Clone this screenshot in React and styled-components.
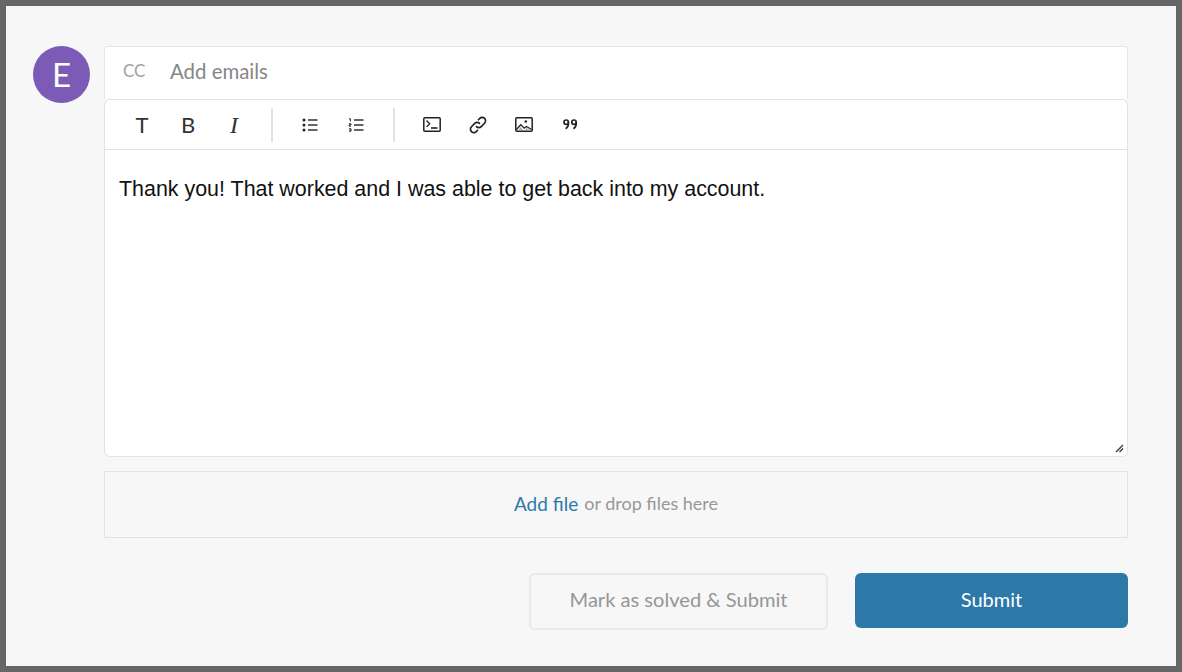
import React from 'react'
import styled, { createGlobalStyle } from 'styled-components'

const GlobalStyle = createGlobalStyle`
  html, body {
    margin: 0;
    padding: 0;
    background: #f7f7f7;
  }
  * { box-sizing: border-box; }
`

const ListIcon = () => (
  <svg width="16" height="14" viewBox="0 0 16 14">
    <circle cx="2" cy="2" r="1.500" fill="#222" />
    <circle cx="2" cy="7" r="1.500" fill="#222" />
    <circle cx="2" cy="12" r="1.500" fill="#222" />
    <path d="M6 2h9.500M6 7h9.500M6 12h9.500" stroke="#333" strokeWidth="1.600" fill="none" />
  </svg>
)

const OrderedIcon = () => (
  <svg width="16" height="14" viewBox="0 0 16 14">
    <path d="M1 .8h1.400v2.600M1 5.800h2v1.100h-2v1.200h2M1 10.800h2v2.400h-2M1.500 12h1.500" stroke="#222" strokeWidth="1" fill="none" />
    <path d="M6 2h9.500M6 7h9.500M6 12h9.500" stroke="#333" strokeWidth="1.600" fill="none" />
  </svg>
)

const TerminalIcon = () => (
  <svg width="18" height="15" viewBox="0 0 18 15" fill="none">
    <rect x=".8" y=".8" width="16.400" height="13.400" rx="1" stroke="#222" strokeWidth="1.500" />
    <path d="M3.500 3.500l3.200 3.200-3.200 3.200" stroke="#222" strokeWidth="1.300" />
    <path d="M8 11h6.500" stroke="#222" strokeWidth="1.600" />
  </svg>
)

const LinkIcon = () => (
  <svg width="20" height="20" viewBox="0 0 18 18" fill="none" stroke="#222" strokeWidth="1.500" strokeLinecap="round">
    <path d="M7.600 10.400a3 3 0 0 0 4.300 0l3-3a3 3 0 0 0-4.300-4.300l-1.200 1.200" />
    <path d="M10.400 7.600a3 3 0 0 0-4.300 0l-3 3a3 3 0 0 0 4.300 4.300l1.200-1.200" />
  </svg>
)

const ImageIcon = () => (
  <svg width="18" height="15" viewBox="0 0 18 15" fill="none">
    <rect x=".8" y=".8" width="16.400" height="13.400" rx="1" stroke="#222" strokeWidth="1.500" />
    <circle cx="10.800" cy="4.500" r="1.300" fill="#222" />
    <path d="M1.500 12.500l4.300-4.700 3.500 3.300 2.200-1.600 5 3" stroke="#222" strokeWidth="1.300" />
    <path d="M3.500 13l2.300-3 2.500 3zM10 13l1.500-2 3 2z" fill="#222" fillOpacity=".35" />
  </svg>
)

const QuoteIcon = () => (
  <svg width="15" height="11" viewBox="0 0 15 11" fill="none" stroke="#222" strokeWidth="1.700">
    <circle cx="3.200" cy="3.200" r="2.200" />
    <circle cx="11" cy="3.200" r="2.200" />
    <path d="M5.400 3.200c.2 3-.8 5.300-2.800 6.600M13.200 3.200c.2 3-.8 5.300-2.800 6.600" />
  </svg>
)

const App = () => (
  <Frame>
    <GlobalStyle />
    <Avatar>E</Avatar>
    <Main>
      <CcRow>
        <CcLabel>CC</CcLabel>
        <CcInput>Add emails</CcInput>
      </CcRow>
      <Editor>
        <Toolbar>
          <ToolGroup>
            <Tool><Glyph>T</Glyph></Tool>
            <Tool><Glyph>B</Glyph></Tool>
            <Tool><Glyph $italic>I</Glyph></Tool>
          </ToolGroup>
          <ToolGroup>
            <Tool><ListIcon /></Tool>
            <Tool><OrderedIcon /></Tool>
          </ToolGroup>
          <ToolGroup>
            <Tool><TerminalIcon /></Tool>
            <Tool><LinkIcon /></Tool>
            <Tool><ImageIcon /></Tool>
            <Tool><QuoteIcon /></Tool>
          </ToolGroup>
        </Toolbar>
        <Body>Thank you! That worked and I was able to get back into my account.</Body>
        <Grip width="9" height="9" viewBox="0 0 9 9">
          <path d="M1 8l7-7M4.500 8l3.500-3.500" stroke="#444" strokeWidth="1.500" fill="none" />
        </Grip>
      </Editor>
      <DropZone><AddFile>Add file</AddFile> or drop files here</DropZone>
      <Actions>
        <SolveButton>Mark as solved &amp; Submit</SolveButton>
        <SubmitButton>Submit</SubmitButton>
      </Actions>
    </Main>
  </Frame>
)

export default App

const uiFont = `"Lato", "Noto Sans", sans-serif`

const Frame = styled.div`
  display: flex;
  align-items: flex-start;
  gap: 14px;
  width: 1182px;
  height: 672px;
  padding: 40px 48px 0 27px;
  border: 6px solid #666;
  background: #f7f7f7;
  font-family: ${uiFont};
`

const Avatar = styled.div`
  display: flex;
  flex: none;
  align-items: center;
  justify-content: center;
  width: 57px;
  height: 57px;
  border-radius: 50%;
  background: #7c5bb7;
  color: #fff;
  font-size: 33px;
  padding-bottom: 2px;
`

const Main = styled.div`
  display: flex;
  flex-direction: column;
  flex: 1;
`

const CcRow = styled.div`
  display: flex;
  align-items: center;
  height: 53px;
  padding: 0 18px 5px 18px;
  border: 1px solid #e6e6e6;
  border-bottom: 0;
  border-radius: 3px 3px 0 0;
  background: #fff;
  font-size: 20.4px;
`

const CcLabel = styled.span`
  width: 47px;
  color: #a3a3a3;
  font-size: 17px;
`

const CcInput = styled.span`
  color: #868686;
`

const Editor = styled.div`
  position: relative;
  height: 358px;
  border: 1px solid #e2e2e2;
  border-radius: 6px;
  background: #fff;
`

const Toolbar = styled.div`
  display: flex;
  align-items: center;
  height: 50px;
  padding-left: 14px;
  border-bottom: 1px solid #e2e2e2;
`

const ToolGroup = styled.div`
  display: flex;
  align-items: center;
  height: 34px;
  padding-right: 14px;
  margin-right: 14px;
  border-right: 2px solid #e2e2e2;

  &:last-child {
    border-right: 0;
  }
`

const Tool = styled.span`
  display: flex;
  align-items: center;
  justify-content: center;
  width: 46px;
  color: #222;
`

const Glyph = styled.span`
  color: #333;
  font-family: ${p => (p.$italic ? '"Liberation Serif", serif' : '"Lato", sans-serif')};
  font-size: ${p => (p.$italic ? '24px' : '22px')};
  font-style: ${p => (p.$italic ? 'italic' : 'normal')};
  line-height: 1;
`

const Body = styled.div`
  padding: 27px 14px;
  color: #111;
  font-family: "Liberation Sans", sans-serif;
  font-size: 21.43px;
  line-height: 24px;
`

const Grip = styled.svg`
  position: absolute;
  right: 3px;
  bottom: 3px;
`

const DropZone = styled.div`
  display: flex;
  align-items: center;
  justify-content: center;
  gap: 6px;
  height: 67px;
  margin-top: 14px;
  padding-bottom: 3px;
  border: 1px solid #e2e2e2;
  color: #979797;
  font-size: 18px;
`

const AddFile = styled.span`
  color: #2c79a8;
  font-size: 19px;
`

const Actions = styled.div`
  display: flex;
  justify-content: flex-end;
  align-items: flex-start;
  gap: 27px;
  margin-top: 35px;
`

const SolveButton = styled.button`
  width: 299px;
  height: 57px;
  padding-bottom: 6px;
  border: 2px solid #e9e9e9;
  border-radius: 6px;
  background: transparent;
  color: #969696;
  font-family: ${uiFont};
  font-size: 20.1px;
`

const SubmitButton = styled.button`
  width: 273px;
  height: 55px;
  padding-bottom: 4px;
  border: 0;
  border-radius: 6px;
  background: #2c79a8;
  color: #fff;
  font-family: ${uiFont};
  font-size: 20px;
`
